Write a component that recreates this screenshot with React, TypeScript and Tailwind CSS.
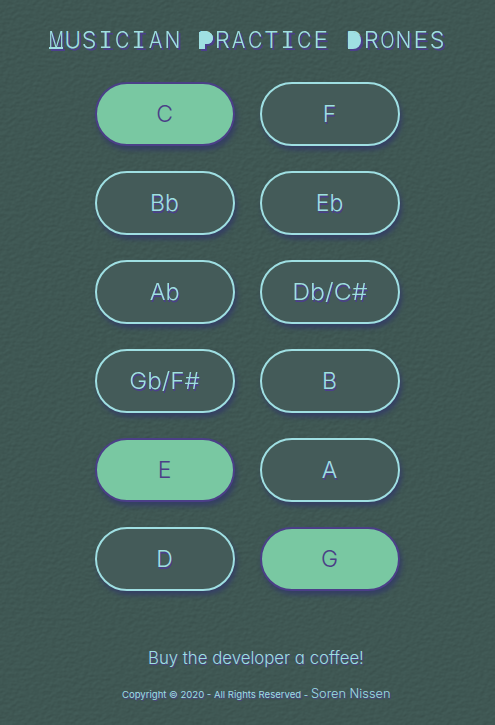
import React from "react";

type Note = { label: string; active?: boolean; spacing?: string };

const notes: Note[] = [
  { label: "C", active: true },
  { label: "F" },
  { label: "Bb" },
  { label: "Eb" },
  { label: "Ab", spacing: "scale-x-[1.02]" },
  { label: "Db/C#", spacing: "scale-x-[1.08]" },
  { label: "Gb/F#", spacing: "scale-x-[1.05]" },
  { label: "B" },
  { label: "E", active: true },
  { label: "A" },
  { label: "D" },
  { label: "G", active: true },
];

function Leather() {
  return (
    <svg className="pointer-events-none absolute inset-0 -z-10 h-full w-full" aria-hidden="true">
      <filter id="leather" x="0" y="0" width="100%" height="100%" colorInterpolationFilters="sRGB">
        <feTurbulence type="fractalNoise" baseFrequency="0.22 0.3" numOctaves="3" seed="8" />
        <feDiffuseLighting surfaceScale="0.18" diffuseConstant="1.37" lightingColor="#3f5753">
          <feDistantLight azimuth="235" elevation="47" />
        </feDiffuseLighting>
      </filter>
      <rect width="100%" height="100%" filter="url(#leather)" />
    </svg>
  );
}

const stretch: Record<string, string> = {
  I: "scale-x-[1.3]",
  E: "scale-x-[1.08]",
  S: "scale-x-[1.03]",
  R: "scale-x-[1.05]",
  C: "scale-x-[0.88]",
  A: "scale-x-[0.9]",
  O: "scale-x-[0.84]",
  N: "scale-x-[0.93]",
};

function Word({ text }: { text: string }) {
  return (
    <span className="flex">
      {text.split("").map((ch, i) => (
        <span key={i} className="flex w-[16.55px] justify-center">
          <span className={stretch[ch]}>{ch}</span>
        </span>
      ))}
    </span>
  );
}

function Title() {
  return (
    <h1 className="ml-[48px] flex h-8 items-center gap-[16.55px] text-[22.5px] font-light leading-8 text-[#9fdfe2] [font-feature-settings:'cv08'] [text-shadow:2px_2px_0_#4b3f8c]">
      <span className="flex">
        <span className="relative flex w-[16.55px] justify-center">
          <span className="scale-x-[0.76]">M</span>
          <span className="absolute left-[1px] top-[23px] h-[1.5px] w-[14px] bg-[#9fdfe2] shadow-[2px_2px_0_#4b3f8c]" />
        </span>
        <Word text="USICIAN" />
      </span>
      <span className="flex">
        <span className="relative flex w-[16.55px] justify-center">
          <span>P</span>
          <span className="absolute left-[2px] top-[8px] h-[12px] w-[14px] rounded-r-full bg-[#9fdfe2] shadow-[2px_2px_0_#4b3f8c]" />
          <span className="absolute left-[2px] top-[8px] h-[17px] w-[6px] bg-[#9fdfe2] shadow-[2px_2px_0_#4b3f8c]" />
          <span className="absolute left-[2px] top-[8px] h-[12px] w-[14px] rounded-r-full bg-[#9fdfe2]" />
        </span>
        <Word text="RACTICE" />
      </span>
      <span className="flex">
        <span className="relative flex w-[16.55px] justify-center">
          <span>D</span>
          <span className="absolute left-[2px] top-[8px] h-[17px] w-[13px] rounded-r-[8px] bg-[#9fdfe2] shadow-[2px_2px_0_#4b3f8c]" />
        </span>
        <Word text="RONES" />
      </span>
    </h1>
  );
}

function NoteButton({ label, active, spacing }: Note) {
  return (
    <button
      className={
        "flex h-16 w-[140px] items-center justify-center rounded-full border-2 pr-px text-[23px] font-[260] shadow-[2px_4px_5px_#343f64] " +
        (active
          ? "border-[#4b3f87] bg-[#79c8a2] text-[#4b3f87]"
          : "border-[#9fdfe2] bg-[#445b59] text-[#9fdfe2] [text-shadow:1px_2px_0_#4b3f8c]")
      }
    >
      <span className={spacing}>{label}</span>
    </button>
  );
}

export default function App() {
  return (
    <main className="relative isolate flex h-[725px] w-[495px] flex-col overflow-hidden bg-[#3f5753] pt-6 font-[Inter,sans-serif] font-light text-[#9fdfe2] [font-feature-settings:'cv11']">
      <Leather />
      <Title />
      <section className="mx-auto mt-[26px] grid grid-cols-2 gap-[25px]">
        {notes.map((note) => (
          <NoteButton key={note.label} {...note} />
        ))}
      </section>
      <footer className="mt-[55px] flex flex-col whitespace-nowrap [text-shadow:1px_1px_1px_#4b3f8c]">
        <a className="ml-[148px] text-[16.8px] leading-6">Buy the developer a coffee!</a>
        <p className="ml-[122px] mt-3 flex items-baseline leading-6">
          <span className="w-[189px] text-[9.55px] font-normal">Copyright © 2020 - All Rights Reserved -</span>
          <a className="text-[12.8px]">Soren Nissen</a>
        </p>
      </footer>
    </main>
  );
}
